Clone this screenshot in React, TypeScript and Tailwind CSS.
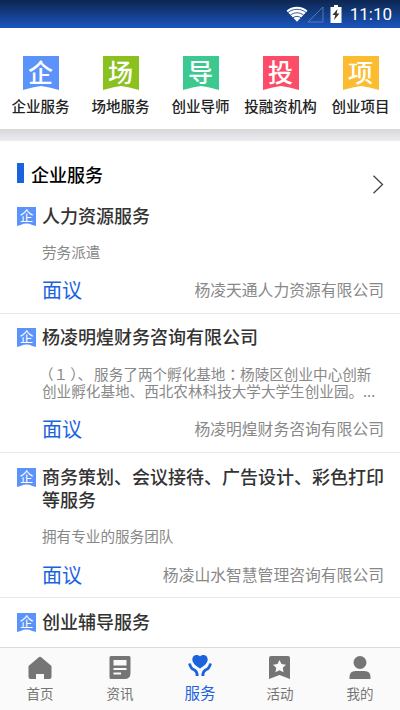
import type { ReactNode } from "react";

const categories = [
  { glyph: "企", label: "企业服务", color: "text-[#5b93fb]" },
  { glyph: "场", label: "场地服务", color: "text-[#8bc11f]" },
  { glyph: "导", label: "创业导师", color: "text-[#3cc98f]" },
  { glyph: "投", label: "投融资机构", color: "text-[#fc4c68]" },
  { glyph: "项", label: "创业项目", color: "text-[#fcbc30]" },
];

const services = [
  {
    id: 1,
    title: "人力资源服务",
    desc: "劳务派遣",
    price: "面议",
    company: "杨凌天通人力资源有限公司",
    height: "h-[121px] pt-[11px]",
    descGap: "mt-4",
    priceGap: "mb-[9px]",
  },
  {
    id: 2,
    title: "杨凌明煌财务咨询有限公司",
    desc: (
      <>
        <span className="-ml-[3px]">（１</span>
        <span className="ml-[2px]">）、</span>
        <span className="ml-[2px]">服务了两个孵化基地</span>
        <span className="font-['Noto_Sans_CJK_TC',sans-serif]">：</span>杨陵区创业中心创新
        <br />
        创业孵化基地、西北农林科技大学大学生创业园。...
      </>
    ),
    price: "面议",
    company: "杨凌明煌财务咨询有限公司",
    height: "h-[139px] pt-[11px]",
    descGap: "mt-[17px]",
    priceGap: "mb-[9px]",
  },
  {
    id: 3,
    title: "商务策划、会议接待、广告设计、彩色打印等服务",
    desc: "拥有专业的服务团队",
    price: "面议",
    company: "杨凌山水智慧管理咨询有限公司",
    height: "h-[145px] pt-3",
    descGap: "mt-4",
    priceGap: "mb-2",
  },
  {
    id: 4,
    title: "创业辅导服务",
    desc: "",
    price: "",
    company: "",
    height: "h-[60px] pt-3",
    descGap: "",
    priceGap: "",
  },
];

const StatusBar = () => (
  <header className="flex h-7 shrink-0 items-center justify-end bg-gradient-to-b from-[#0c2650] to-[#1a56c0] pr-2 text-white">
    <svg width="22" height="16" viewBox="0 0 23 16" fill="none" stroke="#fff">
      <path d="M11.5 16 0.5 4.5C6-1 17-1 22.5 4.5Z" fill="#fff" stroke="none" />
      <path d="M2 6.5C7 2 16 2 21 6.5M4.5 9.3c4-3.4 10-3.4 14 0M7.3 12c2.500-2 6-2 8.500 0" stroke="#1b428c" strokeWidth="0.9" />
    </svg>
    <svg className="-ml-px" width="17" height="17" viewBox="0 0 17 17" fill="none">
      <path d="M16 1v15H1Z" stroke="#6887bd" strokeWidth="0.8" />
    </svg>
    <svg className="ml-[6px]" width="12" height="18" viewBox="0 0 12 18">
      <path d="M4 0h4v2h3.500v16H.5V2H4Z" fill="#fff" />
      <path d="M7.500 4 2.500 10h2.800L4 15l5.500-6.500H6.700Z" fill="#333" />
    </svg>
    <span className="ml-2 font-[Roboto,sans-serif] text-[17px] leading-7">11:10</span>
  </header>
);

const Ribbon = ({ glyph, className, size }: { glyph: string; className: string; size: "lg" | "sm" }) => (
  <div className={`relative flex justify-center ${size === "lg" ? "h-[34px] w-9" : "h-[19px] w-[19px]"} ${className}`}>
    <svg className="absolute inset-0 h-full w-full" viewBox="0 0 36 34" preserveAspectRatio="none" fill="currentColor">
      <path d={size === "lg" ? "M0 0h36v34q-10-3-18-4q-8 1-18 4Z" : "M0 0h36v34l-7-2q-11-5-22 0l-7 2Z"} />
    </svg>
    <span className={`relative text-white ${size === "lg" ? "text-[25px] leading-[30px] font-medium" : "text-[13.500px] leading-[16px]"}`}>
      {glyph}
    </span>
  </div>
);

const TabItem = ({ label, active, children }: { label: string; active?: boolean; children: ReactNode }) => (
  <button className={`flex flex-1 flex-col items-center pt-[7px] ${active ? "text-[#1b63de]" : "text-[#757575]"}`}>
    <svg width="28" height="26" viewBox="0 0 28 26" fill="currentColor">
      {children}
    </svg>
    <span className={`leading-5 ${active ? "mt-px text-[15.500px]" : "mt-[2px] text-[13.500px]"}`}>{label}</span>
  </button>
);

export default function App() {
  return (
    <div className="flex h-[710px] w-[400px] flex-col overflow-hidden bg-white font-['Noto_Sans_CJK_SC',sans-serif]">
      <StatusBar />

      <nav className="flex h-[101px] shrink-0 pt-7">
        {categories.map((c) => (
          <div key={c.label} className="flex w-20 flex-col items-center pl-px">
            <Ribbon glyph={c.glyph} className={c.color} size="lg" />
            <span className="mt-[6px] text-[14.500px] leading-5 font-medium whitespace-nowrap text-[#222]">{c.label}</span>
          </div>
        ))}
      </nav>
      <div className="h-3 shrink-0 bg-gradient-to-b from-[#d8d8da] to-[#ececf2]" />

      <main className="min-h-0 flex-1 overflow-hidden">
        <div className="flex h-[52px] items-start justify-between pr-4 pl-[17px]">
          <div className="mt-[21px] flex items-start">
            <i className="mt-px h-5 w-[7px] bg-[#1b63de]" />
            <h2 className="ml-[7px] text-[18px] leading-6 font-medium text-black">企业服务</h2>
          </div>
          <svg className="mt-[34px]" width="12" height="19" viewBox="0 0 12 19" fill="none" stroke="#444" strokeWidth="1.300">
            <path d="m1.500.800 9 8.700-9 8.700" />
          </svg>
        </div>

        {services.map((s) => (
          <article key={s.id} className={`flex flex-col border-b border-[#e8e8e8] pr-4 pl-[17px] ${s.height}`}>
            <div className="flex items-start gap-[6px]">
              <Ribbon glyph="企" className="mt-[3px] shrink-0 text-[#5b93fb]" size="sm" />
              <h3 className="-mr-1 text-[18px] leading-[23px] font-medium text-[#333]">{s.title}</h3>
            </div>
            <p className={`pl-[25px] text-[14.600px] leading-[17px] whitespace-nowrap text-[#888] ${s.descGap}`}>{s.desc}</p>
            <div className={`mt-auto flex items-center justify-between pl-[25px] ${s.priceGap}`}>
              <span className="text-[20px] leading-7 text-[#1b63de]">{s.price}</span>
              <span className="text-[15.800px] text-[#888]">{s.company}</span>
            </div>
          </article>
        ))}
      </main>

      <footer className="flex h-[63px] shrink-0 border-t border-[#dcdcdc] bg-[#fafafa]">
        <TabItem label="首页">
          <path d="M12.500 2.500 2.500 11v11q0 2 2 2H10v-5h8v5h5.500q2 0 2-2V11L15.500 2.500Q14 1 12.500 2.500Z" />
        </TabItem>
        <TabItem label="资讯">
          <path fillRule="evenodd" d="M5 1h18q1.500 0 1.500 1.500v15.500q0 6-6 6H5q-1.500 0-1.500-1.500v-20Q3.500 1 5 1Zm2.500 4v5.500h13V5Zm0 8v2h13v-2Zm0 4.500v2h7.500v-2Z" />
        </TabItem>
        <TabItem label="服务" active>
          <path d="M14 13.500C10 11 6.300 8 6.300 4.500C6.300-.5 12-1 14 1.500C16-1 21.700-.5 21.700 4.500C21.700 8 18 11 14 13.500Z" />
          <path d="M3.500 8.500q1 5 5 6.500 2.700 1.500 2.700 6M24.500 8.500q-1 5-5 6.500-2.700 1.500-2.700 6" fill="none" stroke="currentColor" strokeWidth="2.800" />
        </TabItem>
        <TabItem label="活动">
          <path fillRule="evenodd" d="M5 1h17q2 0 2 2v21l-10.500-4L3 24V3q0-2 2-2Zm8.500 4-2 4-4.500.7 3.200 3.100-.700 4.500 4-2.100 4 2.100-.7-4.500 3.200-3.100-4.500-.7Z" />
        </TabItem>
        <TabItem label="我的">
          <circle cx="14" cy="7.500" r="6.500" />
          <path d="M3.500 24v-2q0-6 6-6h9q6 0 6 6v2Z" />
        </TabItem>
      </footer>
    </div>
  );
}
